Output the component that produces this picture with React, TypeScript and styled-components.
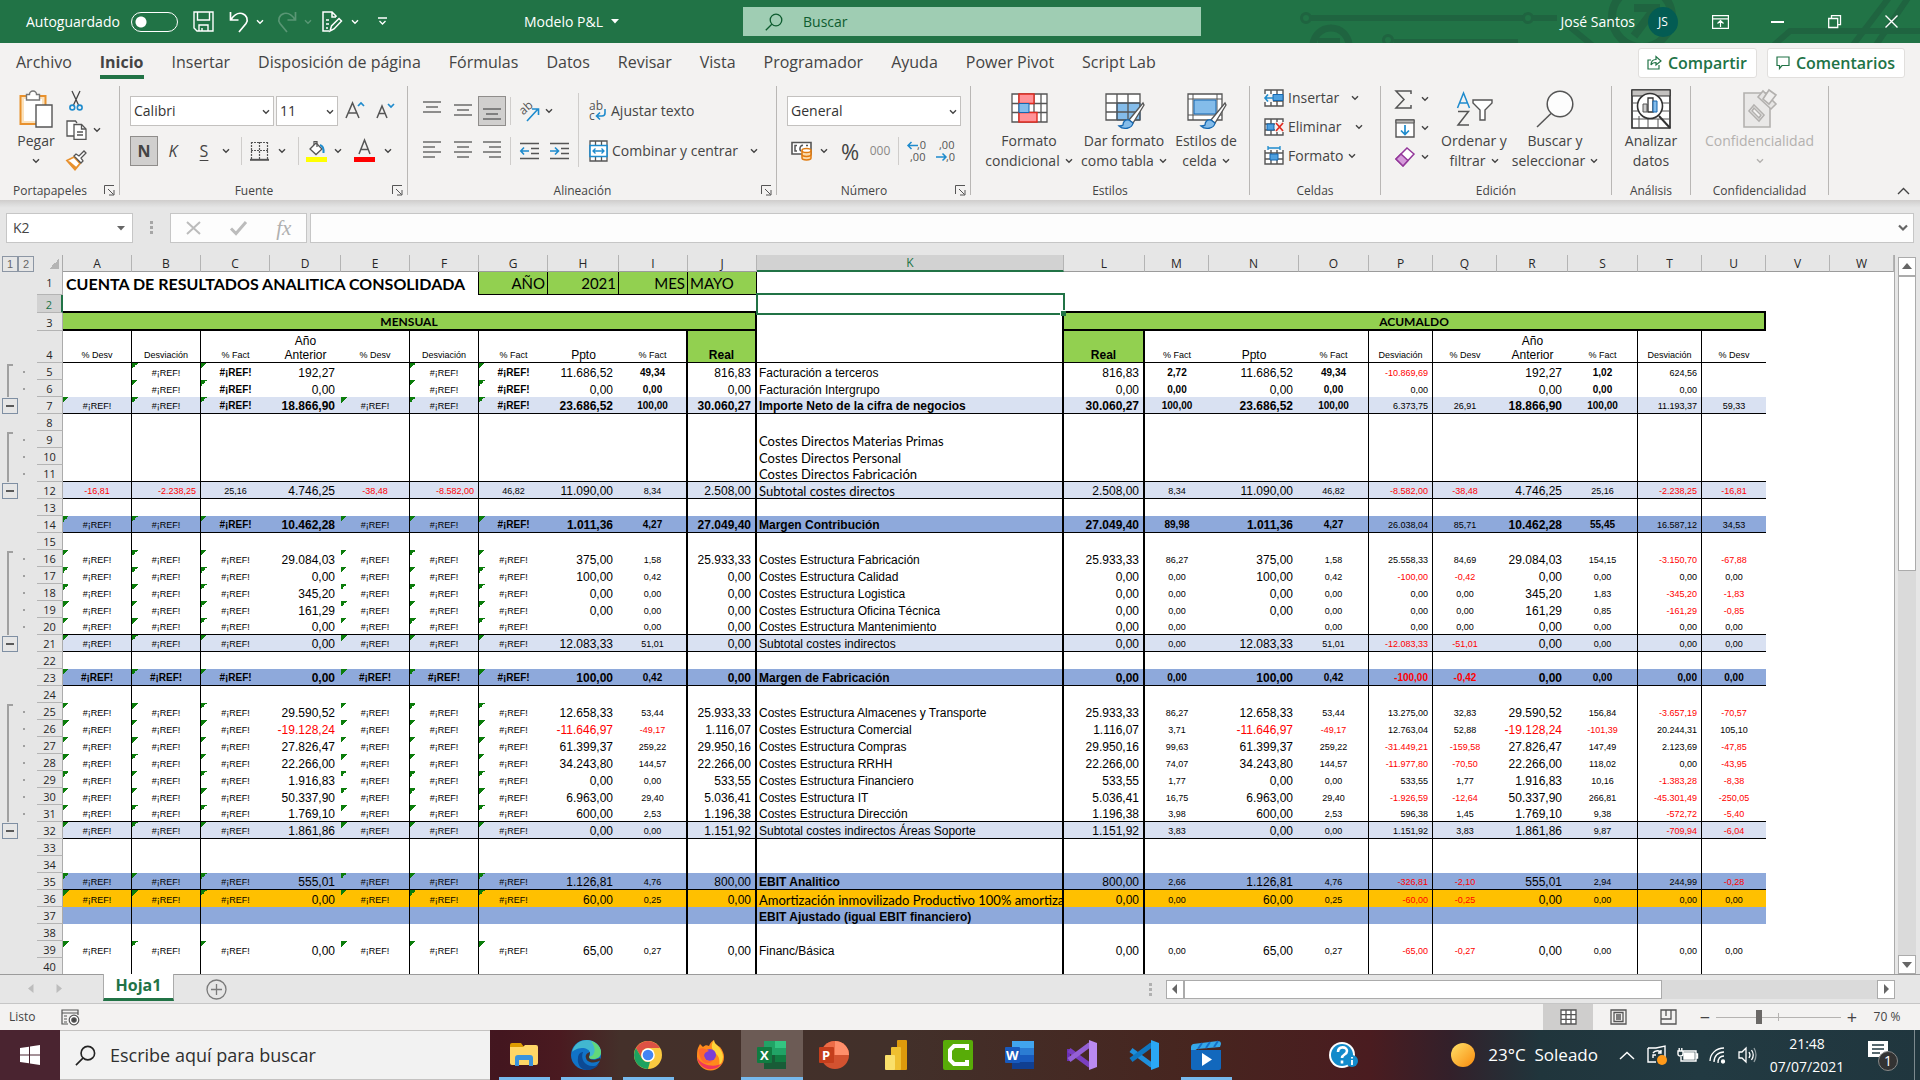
import React from 'react';
import styled, { createGlobalStyle, css } from 'styled-components';

const ui = `'Open Sans', 'Noto Sans', sans-serif`;
const arial = `'Liberation Sans', Arial, sans-serif`;
const calibri = `Lato, 'Open Sans', sans-serif`;
const green = '#217346';
const ink = '#444444';
const blue = '#1e8bcd';

const GlobalStyle = createGlobalStyle`
  *, *::before, *::after { box-sizing: border-box; }
  html, body { margin: 0; padding: 0; overflow: hidden; }
  button, input, select { font: inherit; color: inherit; margin: 0; border-radius: 0; }
  button { padding: 0; border: 0; background: none; cursor: default; }
  svg { display: block; flex: none; overflow: visible; }
`;

const Window = styled.div`
  display: flex;
  flex-direction: column;
  height: 100vh;
  overflow: hidden;
  background: #e6e6e6;
  color: ${ink};
  font: 14px/20px ${ui};
`;

/* ---------- title bar ---------- */

const TitleBar = styled.header`
  position: relative;
  display: grid;
  grid-template-columns: 743fr 458fr 719fr;
  align-items: center;
  flex: none;
  height: 43px;
  background: ${green};
  color: #fff;
  overflow: hidden;
`;

const Circuit = styled.svg`
  position: absolute;
  top: 0;
  right: 0;
`;

const TitleLeft = styled.div`
  display: flex;
  align-items: center;
  padding-left: 26px;
  height: 43px;
  line-height: 20px;
`;

const QuickButton = styled.button<{ $w: number; $dim?: boolean }>`
  display: flex;
  align-items: center;
  justify-content: center;
  width: ${p => p.$w}px;
  height: 32px;
  color: #fff;
  opacity: ${p => (p.$dim ? 0.25 : 1)};
`;

const SwitchLabel = styled.label`
  display: flex;
  align-items: center;
  justify-content: space-between;
  width: 152px;
  font-size: 14px;
`;

const Switch = styled.input`
  appearance: none;
  width: 47px;
  height: 20px;
  border: 1px solid #fff;
  border-radius: 10px;
  background: radial-gradient(circle at 9px 9px, #fff 5px, transparent 6px);
`;

const DocName = styled.button`
  display: flex;
  align-items: center;
  gap: 8px;
  margin-left: auto;
  margin-right: 124px;
  font-size: 14px;
  color: #fff;
`;

const SearchBox = styled.label`
  display: flex;
  align-items: center;
  gap: 18px;
  height: 29px;
  padding-left: 22px;
  background: #9fcdb3;
  color: #0e5c2f;
  font-size: 14px;
`;

const SearchInput = styled.input`
  flex: 1;
  min-width: 0;
  border: 0;
  outline: 0;
  background: transparent;
  &::placeholder { color: #0e5c2f; opacity: 1; }
`;

const TitleRight = styled.div`
  position: relative;
  display: flex;
  align-items: center;
  justify-content: flex-end;
  font-size: 14px;
`;

const Avatar = styled.span`
  width: 30px;
  height: 30px;
  margin: 0 14px 0 13px;
  border-radius: 50%;
  background: #035c53;
  font-size: 12px;
  line-height: 30px;
  text-align: center;
`;

const WinButton = styled.button`
  display: flex;
  align-items: center;
  justify-content: center;
  width: 57px;
  height: 43px;
  color: #fff;
`;

/* ---------- ribbon ---------- */

const TabRow = styled.nav`
  display: flex;
  align-items: center;
  flex: none;
  height: 39px;
  padding: 0 15px 0 16px;
  gap: 28px;
  background: #f3f2f1;
  font-size: 16px;
`;

const Tab = styled.button<{ $active?: boolean }>`
  height: 34px;
  border-bottom: 4px solid ${p => (p.$active ? green : 'transparent')};
  padding-top: 4px;
  font-weight: ${p => (p.$active ? 700 : 400)};
  font-size: 16px;
  line-height: 26px;
  white-space: nowrap;
  align-self: flex-start;
  margin-top: 2px;
`;

const TabActions = styled.div`
  display: flex;
  gap: 10px;
  margin-left: auto;
`;

const ActionButton = styled.button`
  display: flex;
  align-items: center;
  gap: 6px;
  height: 30px;
  padding: 0 9px 0 8px;
  border: 1px solid #e1dfdd;
  border-radius: 3px;
  background: #fff;
  color: ${green};
  font-size: 16px;
  font-weight: 600;
  line-height: 24px;
`;

const Ribbon = styled.section`
  display: flex;
  flex: none;
  height: 118px;
  padding: 4px 0 5px;
  background: #f3f2f1;
`;

const RibbonShadow = styled.div`
  flex: none;
  height: 13px;
  background: linear-gradient(#cfcdcc, #dedede 5px, #e6e6e6 8px);
`;

const GroupBox = styled.div<{ $w: number }>`
  display: flex;
  flex-direction: column;
  flex: none;
  width: ${p => p.$w}px;
  border-right: 1px solid #b9b7b5;
`;

const GroupBody = styled.div<{ $top: number; $left: number }>`
  display: flex;
  height: 100px;
  padding: ${p => p.$top}px 0 0 ${p => p.$left}px;
`;

const GroupFoot = styled.div`
  display: flex;
  align-items: center;
  height: 9px;
  font-size: 12px;
  line-height: 9px;
`;

const GroupName = styled.span`
  flex: 1;
  text-align: center;
  white-space: nowrap;
`;

const Launcher = styled.button`
  display: flex;
  width: 19px;
  justify-content: center;
`;

const Stack = styled.div<{ $w?: number; $gap?: number }>`
  display: flex;
  flex-direction: column;
  gap: ${p => p.$gap ?? 10}px;
  width: ${p => (p.$w ? `${p.$w}px` : 'auto')};
`;

const Row = styled.div<{ $h?: number }>`
  display: flex;
  align-items: center;
  height: ${p => p.$h ?? 30}px;
`;

const Tool = styled.button<{ $w: number; $on?: boolean }>`
  display: flex;
  align-items: center;
  justify-content: center;
  flex: none;
  width: ${p => p.$w}px;
  height: 30px;
  font-size: 16px;
  line-height: 24px;
  ${p => p.$on && css`
    background: #d0cfce;
    border: 1px solid #8f8d8b;
  `}
`;

const TextTool = styled.button`
  display: flex;
  align-items: center;
  gap: 4px;
  height: 30px;
  font-size: 14px;
  white-space: nowrap;
`;

const Divider = styled.span<{ $w: number }>`
  flex: none;
  width: ${p => p.$w}px;
  height: 28px;
  background: linear-gradient(#cfcdcb, #cfcdcb) center / 1px 100% no-repeat;
`;

const TallDivider = styled.span`
  width: 1px;
  height: 74px;
  margin: -3px 10px 0 0;
  background: #cfcdcb;
`;

const Picker = styled.span<{ $w: number }>`
  position: relative;
  width: ${p => p.$w}px;
  height: 30px;
  margin-right: 2px;
  & > svg { position: absolute; right: 4px; top: 13px; pointer-events: none; }
`;

const Select = styled.select`
  appearance: none;
  width: 100%;
  height: 30px;
  padding: 0 18px 0 3px;
  border: 1px solid #c3c1bf;
  background: #fff;
  color: #333;
  font-size: 14px;
  outline: 0;
`;

const BigButton = styled.button<{ $w: number; $off?: boolean }>`
  display: flex;
  flex-direction: column;
  align-items: center;
  flex: none;
  width: ${p => p.$w}px;
  height: 86px;
  color: ${p => (p.$off ? '#b3b1af' : ink)};
  font-size: 14px;
  line-height: 20px;
  white-space: nowrap;
`;

const BigIcon = styled.span`
  display: flex;
  align-items: center;
  height: 43px;
  padding-bottom: 2px;
`;

const BigLine = styled.span`
  display: flex;
  align-items: center;
  gap: 5px;
  height: 20px;
`;

const Collapse = styled.button`
  margin: auto 10px 0 auto;
`;

/* ---------- formula bar ---------- */

const FormulaBar = styled.div`
  display: flex;
  flex: none;
  height: 42px;
  padding: 0 6px 0 6px;
`;

const NameBox = styled.div`
  display: flex;
  align-items: center;
  width: 127px;
  height: 30px;
  padding-right: 7px;
  border: 1px solid #c6c6c6;
  background: #fff;
`;

const NameInput = styled.input`
  flex: 1;
  min-width: 0;
  padding: 0 6px;
  border: 0;
  outline: 0;
  background: none;
  font-size: 14px;
`;

const Grip = styled.span`
  width: 37px;
  height: 30px;
  padding: 8px 17px;
  background: repeating-linear-gradient(#a6a6a6 0 3px, transparent 3px 5px) content-box;
`;

const FxBox = styled.div`
  display: flex;
  justify-content: space-around;
  align-items: center;
  width: 137px;
  height: 30px;
  margin-right: 3px;
  border: 1px solid #c6c6c6;
  background: #fdfdfd;
  color: #bcbcbc;
`;

const FxButton = styled.button`
  font: italic 21px/26px 'Liberation Serif', serif;
  color: #b0b0b0;
`;

const FormulaField = styled.div`
  display: flex;
  align-items: center;
  flex: 1;
  height: 30px;
  padding-right: 5px;
  border: 1px solid #c6c6c6;
  background: #fdfdfd;
`;

const FormulaInput = styled.input`
  flex: 1;
  border: 0;
  outline: 0;
  background: none;
`;

/* ---------- sheet ---------- */

const SheetArea = styled.main`
  display: flex;
  flex: 1;
  min-height: 0;
  overflow: hidden;
`;

const SheetClip = styled.div`
  flex: 1;
  min-width: 0;
  overflow: hidden;
  border-right: 1px solid #ababab;
`;

const Sheet = styled.table`
  width: 100%;
  table-layout: fixed;
  border-collapse: separate;
  border-spacing: 0;
  color: #000;
  th, td { padding: 0; overflow: hidden; white-space: nowrap; }
`;

const ColHead = styled.th<{ $sel?: boolean }>`
  height: 17px;
  border-right: 1px solid #b4b4b4;
  border-bottom: ${p => (p.$sel ? `2px solid ${green}` : '1px solid #9b9b9b')};
  background: ${p => (p.$sel ? '#d2d2d2' : '#e6e6e6')};
  color: ${p => (p.$sel ? green : '#262626')};
  font: 12px/15px ${ui};
`;

const Corner = styled.th`
  height: 17px;
  border-right: 1px solid #ababab;
  background: linear-gradient(135deg, transparent 50%, #b4b4b4 50%) right 3px bottom 3px / 10px 10px no-repeat #e6e6e6;
`;

const RowHead = styled.th<{ $sel?: boolean; $middle?: boolean }>`
  border-right: ${p => (p.$sel ? `2px solid ${green}` : '1px solid #ababab')};
  border-bottom: 1px solid #b4b4b4;
  background: ${p => (p.$sel ? '#d2d2d2' : '#e6e6e6')};
  color: ${p => (p.$sel ? green : '#262626')};
  font: 11px/14px ${ui};
  text-align: center;
  vertical-align: ${p => (p.$middle ? 'middle' : 'bottom')};
`;

const LevelCell = styled.th`
  background: #e6e6e6;
  text-align: left;
  font-size: 0;
  line-height: 0;
`;

const LevelButton = styled.button`
  width: 16px;
  height: 16px;
  border: 1px solid #8c96a4;
  color: #666;
  font: 11px/14px ${arial};
  vertical-align: top;
  &:first-child { margin-left: 2px; }
`;

const OutlineCell = styled.th<{ $kind: string }>`
  background-color: #e6e6e6;
  text-align: left;
  ${p => p.$kind === 'first' && css`
    background-image: linear-gradient(#a0a0a0, #a0a0a0), linear-gradient(#a0a0a0, #a0a0a0), linear-gradient(#a0a0a0, #a0a0a0);
    background-position: 7px 1px, 7px 1px, 23px 8px;
    background-size: 6px 2px, 2px 100%, 2px 2px;
    background-repeat: no-repeat;
  `}
  ${p => p.$kind === 'mid' && css`
    background-image: linear-gradient(#a0a0a0, #a0a0a0), linear-gradient(#a0a0a0, #a0a0a0);
    background-position: 7px 0, 23px 8px;
    background-size: 2px 100%, 2px 2px;
    background-repeat: no-repeat;
  `}
`;

const FoldButton = styled.button`
  display: flex;
  align-items: center;
  justify-content: center;
  width: 16px;
  height: 16px;
  margin-left: 2px;
  border: 1px solid #7f8fa3;
  &::after { content: ''; width: 8px; height: 2px; background: #5a5a5a; }
`;

type CellProps = {
  $right?: number;
  $bottom?: number;
  $fill?: string;
  $align?: string;
  $size?: number;
  $bold?: boolean;
  $red?: boolean;
  $err?: boolean;
  $calibri?: boolean;
  $pad?: number;
  $middle?: boolean;
};

const Cell = styled.td<CellProps>`
  position: relative;
  border: 0 solid #000;
  border-right-width: ${p => p.$right ?? 0}px;
  border-bottom-width: ${p => p.$bottom ?? 0}px;
  background-color: ${p => p.$fill ?? '#fff'};
  && { padding: 0 ${p => p.$pad ?? 0}px; }
  color: ${p => (p.$red ? '#ff0000' : '#000')};
  font-family: ${p => (p.$calibri ? calibri : arial)};
  font-size: ${p => p.$size ?? 12}px;
  font-weight: ${p => (p.$bold ? 700 : 400)};
  line-height: 14px;
  text-align: ${p => p.$align ?? 'left'};
  vertical-align: ${p => (p.$middle ? 'middle' : 'bottom')};
  ${p => p.$err && css`
    background-image: linear-gradient(135deg, #0b7d0b 50%, transparent 50%);
    background-size: 6px 6px;
    background-repeat: no-repeat;
  `}
`;

const ActiveCell = styled.td`
  position: relative;
  background: #fff;
  && { overflow: visible; }
`;

const Selection = styled.div`
  position: absolute;
  z-index: 2;
  inset: -2px -1px;
  border: 2px solid ${green};
  &::after {
    content: '';
    position: absolute;
    right: -3px;
    bottom: -3px;
    width: 6px;
    height: 6px;
    border: 1px solid #fff;
    border-width: 1px 0 0 1px;
    background: ${green};
  }
`;

const VScroll = styled.div`
  display: flex;
  flex-direction: column;
  flex: none;
  width: 18px;
  margin: 2px 4px 0 3px;
  background: #dadada;
`;

const ScrollButton = styled.button<{ $end?: boolean }>`
  display: flex;
  align-items: center;
  justify-content: center;
  flex: none;
  width: 18px;
  height: 19px;
  margin-top: ${p => (p.$end ? 'auto' : '0')};
  border: 1px solid #ababab;
  background: #fff;
`;

const VThumb = styled.div`
  height: 295px;
  border: 1px solid #ababab;
  background: #fff;
`;

/* ---------- sheet tabs and status bar ---------- */

const SheetTabs = styled.div`
  display: flex;
  flex: none;
  height: 30px;
  border-top: 1px solid #9b9b9b;
  border-bottom: 1px solid #c6c6c6;
`;

const TabArrows = styled.div`
  display: flex;
  align-items: center;
  gap: 22px;
  width: 103px;
  height: 27px;
  padding-left: 28px;
`;

const SheetTab = styled.button`
  width: 71px;
  height: 27px;
  margin-top: -1px;
  padding-bottom: 3px;
  border: 1px solid #ababab;
  border-width: 0 1px;
  border-bottom: 3px solid ${green};
  background: #fff;
  color: ${green};
  font-size: 16px;
  font-weight: 700;
  line-height: 20px;
`;

const AddSheet = styled.button`
  height: 28px;
  margin-left: 32px;
`;

const HScroll = styled.div`
  display: flex;
  align-items: center;
  width: 746px;
  margin-left: auto;
  margin-right: 25px;
  height: 28px;
`;

const HGrip = styled.span`
  width: 3px;
  height: 13px;
  margin-right: 14px;
  background: repeating-linear-gradient(#b0b0b0 0 3px, transparent 3px 5px);
`;

const HTrack = styled.div`
  flex: 1;
  height: 19px;
  background: #dadada;
`;

const HThumb = styled.div`
  width: 69%;
  height: 19px;
  border: 1px solid #ababab;
  background: #fff;
`;

const StatusBar = styled.footer`
  display: flex;
  align-items: center;
  flex: none;
  height: 26px;
  padding: 0 18px 0 9px;
  background: #f3f2f1;
  font-size: 12px;
`;

const StatusIcon = styled.button`
  margin-left: 25px;
`;

const Views = styled.div`
  display: flex;
  margin-left: auto;
`;

const ViewButton = styled.button<{ $on?: boolean }>`
  display: flex;
  align-items: center;
  justify-content: center;
  width: 50px;
  height: 26px;
  background: ${p => (p.$on ? '#cfcecd' : 'transparent')};
`;

const ZoomBox = styled.div`
  display: flex;
  align-items: center;
  gap: 5px;
  margin-left: 6px;
`;

const ZoomStep = styled.button`
  width: 12px;
  font-size: 18px;
  line-height: 20px;
`;

const ZoomSlider = styled.input`
  appearance: none;
  width: 125px;
  height: 16px;
  outline: 0;
  background:
    linear-gradient(#b5b3b1, #b5b3b1) center / 1px 8px no-repeat,
    linear-gradient(#b5b3b1, #b5b3b1) center / 100% 1px no-repeat;
  &::-webkit-slider-thumb { appearance: none; width: 6px; height: 14px; background: #6a6866; }
`;

const ZoomValue = styled.button`
  width: 30px;
  margin-left: 9px;
  font-size: 12px;
  white-space: nowrap;
`;

/* ---------- taskbar ---------- */

const Taskbar = styled.footer`
  display: flex;
  flex: none;
  height: 50px;
  color: #fff;
  background: linear-gradient(90deg, #4a2430 0, #4a2430 60px, #43161f 500px, #4a1a20 560px, #44302a 620px, #42302a 900px, #47251f 1200px, #4a1c20 1370px, #33202a 1450px, #20353c 1540px, #223a42 1700px, #20363e 100%);
`;

const StartButton = styled.button`
  display: flex;
  align-items: center;
  justify-content: center;
  width: 60px;
  height: 50px;
`;

const TaskSearch = styled.label`
  display: flex;
  align-items: center;
  gap: 12px;
  width: 430px;
  padding-left: 15px;
  border: 1px solid #c4c2c1;
  border-width: 1px 0;
  background: #f2f2f2;
  color: #222;
`;

const TaskInput = styled.input`
  flex: 1;
  height: 30px;
  border: 0;
  outline: 0;
  background: none;
  font-size: 18px;
  &::placeholder { color: #2f2f2f; opacity: 1; }
`;

const TaskApps = styled.div`
  display: flex;
  padding-left: 3px;
`;

const AppButton = styled.button<{ $open?: boolean; $on?: boolean }>`
  display: flex;
  align-items: center;
  justify-content: center;
  width: 62px;
  height: 50px;
  background: ${p => (p.$on ? '#6c5b55' : 'transparent')};
  background-image: ${p => (p.$open ? 'linear-gradient(#76b9ed, #76b9ed)' : 'none')};
  background-size: ${p => (p.$on ? '100%' : '51px')} 3px;
  background-position: bottom center;
  background-repeat: no-repeat;
`;

const Tray = styled.div`
  display: flex;
  align-items: center;
  margin-left: auto;
  padding-right: 5px;
`;

const TrayButton = styled.button<{ $w: number }>`
  display: flex;
  align-items: center;
  justify-content: center;
  width: ${p => p.$w}px;
  height: 50px;
  color: #fff;
`;

const Weather = styled.button`
  display: flex;
  align-items: center;
  gap: 13px;
  margin-left: 92px;
  margin-right: 14px;
  color: #fff;
  font-size: 17px;
  line-height: 24px;
  white-space: pre;
`;

const Clock = styled.time`
  width: 90px;
  font-size: 14px;
  line-height: 23px;
  text-align: center;
  white-space: nowrap;
`;

const Edge = styled.span`
  width: 1px;
  height: 50px;
  background: #7c898e;
`;

/* ---------- small drawings ---------- */

const Chev = ({ size = 8, color = 'currentColor' }: { size?: number; color?: string }) => (
  <svg width={size} height={size / 2 + 2} viewBox="0 0 8 6" fill="none" stroke={color} strokeWidth="1.4">
    <path d="M1 1.2l3 3 3-3" />
  </svg>
);

const Tri = ({ dir }: { dir: 'up' | 'down' | 'left' | 'right' }) => {
  const d = { up: 'M0 7h10L5 1z', down: 'M0 2h10L5 8z', left: 'M7 0v10L2 5z', right: 'M3 0v10l5-5z' }[dir];
  return (
    <svg width="10" height="10" viewBox="0 0 10 10">
      <path d={d} fill="#666" />
    </svg>
  );
};

const LaunchIcon = () => (
  <svg width="11" height="11" viewBox="0 0 11 11" fill="none" stroke="#555">
    <path d="M.5 9V.5H10M4 4l5.500 5.500M10 5v5H5" />
  </svg>
);

const Lines = ({ rows, color = '#555' }: { rows: [number, number, number][]; color?: string }) => (
  <svg width="18" height="20" viewBox="0 0 18 20" stroke={color} strokeWidth="1.300">
    {rows.map(([x1, x2, y]) => (
      <path key={y} d={`M${x1} ${y}H${x2}`} />
    ))}
  </svg>
);

const SearchIcon = ({ size, color, w = 1.3 }: { size: number; color: string; w?: number }) => (
  <svg width={size} height={size} viewBox="0 0 18 18" fill="none" stroke={color} strokeWidth={w}>
    <circle cx="11" cy="7" r="5.800" />
    <path d="M6.800 11.200L.8 17.200" />
  </svg>
);

const PasteIcon = () => (
  <svg width="34" height="40" viewBox="0 0 34 40" fill="none">
    <path d="M1.500 7h25v28h-25z" fill="#fbe2bd" stroke="#e8912d" strokeWidth="2" />
    <path d="M5 10h18v22H5z" fill="#fff" />
    <path d="M7.500 11V5.500h3a3.500 3.500 0 0 1 7 0h3V11z" fill="#fff" stroke="#777" strokeWidth="1.400" />
    <path d="M17 16h16v22H17z" fill="#fff" stroke="#555" strokeWidth="1.400" />
  </svg>
);

const CutIcon = () => (
  <svg width="14" height="20" viewBox="0 0 14 20" fill="none" strokeWidth="1.300">
    <path d="M3 0l6.500 14M11 0L4.500 14" stroke="#444" />
    <circle cx="3.300" cy="16.500" r="2.400" stroke={blue} strokeWidth="1.600" />
    <circle cx="10.700" cy="16.500" r="2.400" stroke={blue} strokeWidth="1.600" />
  </svg>
);

const CopyIcon = () => (
  <svg width="21" height="20" viewBox="0 0 21 20" fill="#fff" stroke="#555" strokeWidth="1.300">
    <path d="M8 16H1V1h8.500L11 3" />
    <path d="M8 4.500h7.500l4.500 4.500v10.300H8z" />
    <path d="M15.500 4.500V9H20M11 12h6M11 15h6" fill="none" />
  </svg>
);

const BrushIcon = () => (
  <svg width="21" height="20" viewBox="0 0 21 20" fill="none">
    <path d="M1 10.500l7-3.500 6 6.500-5 6z" fill="#fff" stroke="#e8912d" strokeWidth="1.800" />
    <path d="M3 12l7 6-3-2z" stroke="#e8912d" strokeWidth="2" />
    <path d="M8 6l2-2 3 2 5-5 2 2-5 5 2 3-2 2z" fill="#fff" stroke="#555" strokeWidth="1.300" />
  </svg>
);

const SaveIcon = () => (
  <svg width="21" height="21" viewBox="0 0 21 21" fill="none" stroke="#fff" strokeWidth="1.400">
    <path d="M1 1h19v19H4l-3-3zM4.500 1v8h12V1M6 20v-6h9v6M9 20v-3" />
  </svg>
);

const UndoIcon = ({ flip }: { flip?: boolean }) => (
  <svg width="20" height="22" viewBox="0 0 20 22" fill="none" stroke="#fff" strokeWidth="1.700">
    <g transform={flip ? 'translate(20 0) scale(-1 1)' : undefined}>
      <path d="M1.500 1v8h8M2 8.500C5 4 9 1.500 13 2.500c5 1.500 6.500 6.500 4 10L10 21" />
    </g>
  </svg>
);

const DocPenIcon = () => (
  <svg width="20" height="22" viewBox="0 0 20 22" fill="none" stroke="#fff" strokeWidth="1.500">
    <path d="M14 6V5l-4-4H1v19h6M10 1v5h4M4 9h3M4 13h3M4 17h2" />
    <path d="M8 20l1.500-5L17 7.500l2.500 2.500L12 18z" />
  </svg>
);

const BordersIcon = () => (
  <svg width="19" height="20" viewBox="0 0 19 20" fill="none" stroke="#555">
    <path d="M1.500 1v17M17.500 1v17M9.500 1v17M1 1.500h17M1 9.500h17" strokeDasharray="2 1" strokeWidth="1.200" />
    <path d="M0 18.800h19" strokeWidth="2" />
  </svg>
);

const BucketIcon = () => (
  <svg width="21" height="22" viewBox="0 0 21 22" fill="none">
    <path d="M4 9l6-6 6 6-6 5.500z" fill="#fff" stroke="#555" strokeWidth="1.300" />
    <path d="M8 5V1.500h3V7" stroke="#555" strokeWidth="1.200" />
    <path d="M14 5c3 1 4 3 3.500 8" stroke={blue} strokeWidth="2" />
    <path d="M0 17h21v5H0z" fill="#ff0" />
  </svg>
);

const FontColorIcon = () => (
  <svg width="21" height="22" viewBox="0 0 21 22" fill="none">
    <path d="M5 14L10.500 0 16 14M7 9.500h7" stroke="#555" strokeWidth="1.500" />
    <path d="M0 17h21v5H0z" fill="#f00" />
  </svg>
);

const GrowIcon = ({ small }: { small?: boolean }) => (
  <svg width="20" height="22" viewBox="0 0 20 22" fill="none" strokeWidth="1.500">
    <path d={small ? 'M1 18L6 6l5 12M3 13.500h6' : 'M1 18L7.500 3 14 18M3.500 13h8'} stroke="#555" />
    <path d={small ? 'M12 4l3 3 3-3' : 'M13 6l3-3 3 3'} stroke={blue} strokeWidth="1.700" />
  </svg>
);

const OrientIcon = () => (
  <svg width="21" height="21" viewBox="0 0 21 21" fill="none">
    <text x="1" y="12" transform="rotate(-42 6 9)" fontFamily={ui} fontSize="12" fill="#555">ab</text>
    <path d="M8 20L19 8M13 8h6.500v6" stroke={blue} strokeWidth="1.600" />
  </svg>
);

const WrapIcon = () => (
  <svg width="18" height="22" viewBox="0 0 18 22" fill="none">
    <text x="0" y="10" fontFamily={ui} fontSize="12" fill="#555">ab</text>
    <text x="0" y="20" fontFamily={ui} fontSize="12" fill="#555">c</text>
    <path d="M16 9v4c0 2-1 3-3 3H8M11 12.500L7.500 16l3.500 3.500" stroke={blue} strokeWidth="1.600" />
  </svg>
);

const MergeIcon = () => (
  <svg width="19" height="22" viewBox="0 0 19 22" fill="none" stroke="#555" strokeWidth="1.300">
    <path d="M1 1h17v20H1zM6.500 1v5M12.500 1v5M6.500 16v5M12.500 16v5" fill="#fff" />
    <path d="M1 5.500h17v11H1z" fill="#fff" stroke={blue} strokeWidth="1.600" />
    <path d="M4 11h11M6.500 8.500L4 11l2.500 2.500M12.500 8.500L15 11l-2.500 2.500" stroke={blue} />
  </svg>
);

const IndentIcon = ({ inward }: { inward?: boolean }) => (
  <svg width="19" height="18" viewBox="0 0 19 18" fill="none" stroke="#555" strokeWidth="1.300">
    <path d="M0 1.500h19M11 6.500h8M11 11.500h8M0 16.500h19" />
    <path d={inward ? 'M0 9h8M5 5.500L8.500 9 5 12.500' : 'M1 9h8M4 5.500L.8 9 4 12.500'} stroke={blue} strokeWidth="1.600" />
  </svg>
);

const CurrencyIcon = () => (
  <svg width="21" height="20" viewBox="0 0 21 20" fill="none">
    <path d="M1 1.500h19V13H1z" fill="#fff" stroke="#555" strokeWidth="1.600" />
    <path d="M6 4.500H4v5.500h2M12 4.500C9 3.500 8 9 10 10M17 4.500h-2" stroke="#555" strokeWidth="1.500" />
    <path d="M11 9.500V17c0 2.500 9 2.500 9 0V9.500" fill="#fbd9a8" stroke="#e07b10" strokeWidth="1.500" />
    <ellipse cx="15.500" cy="9.500" rx="4.500" ry="2" fill="#fff" stroke="#e07b10" strokeWidth="1.500" />
    <path d="M11 13.500c0 2.500 9 2.500 9 0" stroke="#e07b10" strokeWidth="1.500" />
  </svg>
);

const DecimalIcon = ({ less }: { less?: boolean }) => (
  <svg width="21" height="22" viewBox="0 0 21 22" fill="none">
    <text x={less ? 3 : 10} y="9" fontFamily={ui} fontSize="11" fill="#555">{less ? ',00' : ',0'}</text>
    <text x={less ? 10 : 3} y="21" fontFamily={ui} fontSize="11" fill="#555">{less ? ',0' : ',00'}</text>
    <path d={less ? 'M0 17h10M6.500 13.500L10 17l-3.500 3.500' : 'M1 5.500h10M4.500 2L1 5.500 4.500 9'} stroke={blue} strokeWidth="1.500" />
  </svg>
);

const BrushOver = () => (
  <g>
    <path d="M38 11L24 28l4 3L39 13z" fill="#fff" stroke="#555" strokeWidth="1.300" />
    <path d="M24 28c-4-1-6 2-6 5-1 1-3 1-4 1 4 4 13 3 14-3z" fill="#84bcea" stroke="#1467b0" strokeWidth="1.300" />
  </g>
);

const CondIcon = () => (
  <svg width="37" height="34" viewBox="0 0 37 34" fill="none">
    <path d="M1 2h35v28H1zM8 2v28M23 2v28M30 2v28M1 11.500h35M1 20.500h35" fill="#fff" stroke="#555" strokeWidth="1.300" />
    <path d="M8 2h15v9.500H8zM8 20.500h18V30H8z" fill="#ff9297" stroke="#e02b20" strokeWidth="1.400" />
    <path d="M8 11.500h10v9H8z" fill="#84bcea" stroke="#1467b0" />
  </svg>
);

const TableIcon = () => (
  <svg width="39" height="34" viewBox="0 0 39 34" fill="none">
    <path d="M1 2h34v26H1z" fill="#fff" />
    <path d="M12 11h23v17H12z" fill="#84bcea" stroke="#1467b0" />
    <path d="M1 2h34v26H1zM12 2v26M23 2v26M1 11h34M1 20h34" stroke="#555" strokeWidth="1.300" />
    <BrushOver />
  </svg>
);

const StyleIcon = () => (
  <svg width="39" height="34" viewBox="0 0 39 34" fill="none">
    <path d="M1 2h34v26H1z" fill="#fff" stroke="#555" strokeWidth="1.300" />
    <path d="M6 2v26M30 2v26M1 7h34M1 23h34" stroke="#555" />
    <path d="M7 8h22v14H7z" fill="#84bcea" stroke="#1467b0" />
    <BrushOver />
  </svg>
);

const CellsIcon = ({ kind }: { kind: 'in' | 'out' | 'fmt' }) => (
  <svg width="20" height="20" viewBox="0 0 20 20" fill="none">
    <path d="M1 2h18v16H1zM7 2v16M13 2v16M1 7h18M1 13h18" fill="#fff" stroke="#555" strokeWidth="1.400" />
    {kind === 'in' && (
      <g>
        <path d="M0 6h9v8H0z" fill="#f3f2f1" />
        <path d="M9 6.500h10v6H9z" fill="#4fa0df" stroke="#1467b0" />
        <path d="M1 10h8M4 6.500L1 10l3 3.500" stroke={blue} strokeWidth="1.600" />
      </g>
    )}
    {kind === 'out' && (
      <g>
        <path d="M11 5h9v10h-9z" fill="#f3f2f1" />
        <path d="M3 7h7v6H3z" fill="#4fa0df" stroke="#1467b0" />
        <path d="M12 6l7 8M19 6l-7 8" stroke="#e02b20" strokeWidth="1.700" />
      </g>
    )}
    {kind === 'fmt' && (
      <g>
        <path d="M0 0h20v4H0z" fill="#f3f2f1" />
        <path d="M4 2h12M4 0v4M16 0v4" stroke={blue} strokeWidth="1.300" />
        <path d="M6 8h8v6H6z" fill="#4fa0df" stroke="#1467b0" />
      </g>
    )}
  </svg>
);

const SumIcon = () => (
  <svg width="17" height="19" viewBox="0 0 17 19" fill="none" stroke="#555" strokeWidth="1.500">
    <path d="M16 4V1H1l8 8.500L1 18h15v-3" />
  </svg>
);

const FillIcon = () => (
  <svg width="20" height="19" viewBox="0 0 20 19" fill="none">
    <path d="M1 1h18v17H1z" fill="#fff" stroke="#555" strokeWidth="1.400" />
    <path d="M1 1h18v3H1z" fill="#b9b7b5" stroke="#555" />
    <path d="M10 6v9M6 11.500l4 4 4-4" stroke={blue} strokeWidth="1.700" />
  </svg>
);

const EraserIcon = () => (
  <svg width="20" height="20" viewBox="0 0 20 20" fill="none" stroke="#93379a" strokeWidth="1.500">
    <path d="M1 12L12 1l7 6L8 19z" fill="#fff" />
    <path d="M1 12l5-5 7 6.500L8 19z" fill="#d59bda" />
  </svg>
);

const SortIcon = () => (
  <svg width="37" height="36" viewBox="0 0 37 36" fill="none">
    <path d="M1.500 17L7.500 2l6 15M3.500 12h8" stroke={blue} strokeWidth="1.500" />
    <path d="M2 20.500h10.500L2 34h11" stroke="#555" strokeWidth="1.500" />
    <path d="M17 9h19v3l-7 7v10h-5V19l-7-7z" fill="#fff" stroke="#555" strokeWidth="1.400" />
  </svg>
);

const FindIcon = () => (
  <svg width="38" height="38" viewBox="0 0 38 38" fill="none" stroke="#555" strokeWidth="1.500">
    <circle cx="24" cy="14" r="12.800" fill="#fdfdfd" />
    <path d="M15 23.500L1 37" />
  </svg>
);

const AnalyzeIcon = () => (
  <svg width="40" height="40" viewBox="0 0 40 40" fill="none">
    <path d="M1 1h38v38H1z" fill="#fff" stroke="#333" strokeWidth="1.700" />
    <path d="M1 1h38v6H1z" fill="#c4c2c0" stroke="#333" />
    <path d="M1 14h38M1 22h38M1 30h38M8 27v12M17 27v12M27 30v9" stroke="#555" />
    <circle cx="19" cy="17" r="12.500" fill="#fff" stroke="#333" strokeWidth="1.600" />
    <path d="M12 15h4v8h-4z" fill="#ccc" stroke="#555" />
    <path d="M17 9h5v14h-5z" fill="#fff" stroke="#333" strokeWidth="1.300" />
    <path d="M22 12h4v11h-4z" fill="#84bcea" stroke="#1467b0" />
    <path d="M28 27l11 12" stroke="#333" strokeWidth="2" />
  </svg>
);

const SensIcon = () => (
  <svg width="34" height="38" viewBox="0 0 34 38" fill="none" stroke="#b3b1af" strokeWidth="1.600">
    <path d="M1 3h26v34H1z" fill="#e9e8e7" />
    <path d="M11 15l10 10-5 6L6 21z" fill="#f3f2f1" />
    <path d="M11 18l7 7-2 3-7-7z" />
    <path d="M15 7l5-6 13 13-5 5z" fill="#e6e5e4" />
    <path d="M20 9l6-9 7 5-7 9z" fill="#efeeed" />
  </svg>
);

/* ---------- sheet data ---------- */

const columns: [string, number | undefined][] = [
  ['A', 69], ['B', 69], ['C', 69], ['D', 71], ['E', 69], ['F', 69], ['G', 69], ['H', 71], ['I', 69], ['J', 69],
  ['K', 307], ['L', 81], ['M', 64], ['N', 90], ['O', 70], ['P', 64], ['Q', 64], ['R', 71], ['S', 70], ['T', 64],
  ['U', 64], ['V', 64], ['W', undefined],
];

const rightBorder: Record<string, number> = {
  A: 1, B: 1, E: 1, F: 1, I: 2, J: 2, K: 2, L: 2, O: 1, P: 1, S: 1, T: 1,
};
const wide = new Set(['D', 'H', 'J', 'L', 'N', 'R']);
const rightSmall = new Set(['B', 'F', 'P', 'T']);

/* '*' marks bold, '#' a broken reference, '~' the Calibri face */
const cellText: Record<number, string> = {
  5: '|#|*#|192,27||#|*#|11.686,52|*49,34|816,83|Facturación a terceros|816,83|*2,72|11.686,52|*49,34|-10.869,69||192,27|*1,02|624,56|',
  6: '|#|*#|0,00||#|*#|0,00|*0,00|0,00|Facturación Intergrupo|0,00|*0,00|0,00|*0,00|0,00||0,00|*0,00|0,00|',
  7: '#|#|*#|*18.866,90|#|#|*#|*23.686,52|*100,00|*30.060,27|*Importe Neto de la cifra de negocios|*30.060,27|*100,00|*23.686,52|*100,00|6.373,75|26,91|*18.866,90|*100,00|11.193,37|59,33',
  9: '||||||||||~Costes Directos Materias Primas||||||||||',
  10: '||||||||||~Costes Directos Personal||||||||||',
  11: '||||||||||~Costes Directos Fabricación||||||||||',
  12: '-16,81|-2.238,25|25,16|4.746,25|-38,48|-8.582,00|46,82|11.090,00|8,34|2.508,00|~Subtotal costes directos|2.508,00|8,34|11.090,00|46,82|-8.582,00|-38,48|4.746,25|25,16|-2.238,25|-16,81',
  14: '#|#|*#|*10.462,28|#|#|*#|*1.011,36|*4,27|*27.049,40|*Margen Contribución|*27.049,40|*89,98|*1.011,36|*4,27|26.038,04|85,71|*10.462,28|*55,45|16.587,12|34,53',
  16: '#|#|#|29.084,03|#|#|#|375,00|1,58|25.933,33|Costes Estructura Fabricación|25.933,33|86,27|375,00|1,58|25.558,33|84,69|29.084,03|154,15|-3.150,70|-67,88',
  17: '#|#|#|0,00|#|#|#|100,00|0,42|0,00|Costes Estructura Calidad|0,00|0,00|100,00|0,42|-100,00|-0,42|0,00|0,00|0,00|0,00',
  18: '#|#|#|345,20|#|#|#|0,00|0,00|0,00|Costes Estructura Logistica|0,00|0,00|0,00|0,00|0,00|0,00|345,20|1,83|-345,20|-1,83',
  19: '#|#|#|161,29|#|#|#|0,00|0,00|0,00|Costes Estructura Oficina Técnica|0,00|0,00|0,00|0,00|0,00|0,00|161,29|0,85|-161,29|-0,85',
  20: '#|#|#|0,00|#|#|#||0,00|0,00|Costes Estructura Mantenimiento|0,00|0,00||0,00|0,00|0,00|0,00|0,00|0,00|0,00',
  21: '#|#|#|0,00|#|#|#|12.083,33|51,01|0,00|Subtotal costes indirectos|0,00|0,00|12.083,33|51,01|-12.083,33|-51,01|0,00|0,00|0,00|0,00',
  23: '*#|*#|*#|*0,00|*#|*#|*#|*100,00|*0,42|*0,00|*Margen de Fabricación|*0,00|*0,00|*100,00|*0,42|*-100,00|*-0,42|*0,00|*0,00|*0,00|*0,00',
  25: '#|#|#|29.590,52|#|#|#|12.658,33|53,44|25.933,33|Costes Estructura Almacenes y Transporte|25.933,33|86,27|12.658,33|53,44|13.275,00|32,83|29.590,52|156,84|-3.657,19|-70,57',
  26: '#|#|#|-19.128,24|#|#|#|-11.646,97|-49,17|1.116,07|Costes Estructura Comercial|1.116,07|3,71|-11.646,97|-49,17|12.763,04|52,88|-19.128,24|-101,39|20.244,31|105,10',
  27: '#|#|#|27.826,47|#|#|#|61.399,37|259,22|29.950,16|Costes Estructura Compras|29.950,16|99,63|61.399,37|259,22|-31.449,21|-159,58|27.826,47|147,49|2.123,69|-47,85',
  28: '#|#|#|22.266,00|#|#|#|34.243,80|144,57|22.266,00|Costes Estructura RRHH|22.266,00|74,07|34.243,80|144,57|-11.977,80|-70,50|22.266,00|118,02|0,00|-43,95',
  29: '#|#|#|1.916,83|#|#|#|0,00|0,00|533,55|Costes Estructura Financiero|533,55|1,77|0,00|0,00|533,55|1,77|1.916,83|10,16|-1.383,28|-8,38',
  30: '#|#|#|50.337,90|#|#|#|6.963,00|29,40|5.036,41|Costes Estructura IT|5.036,41|16,75|6.963,00|29,40|-1.926,59|-12,64|50.337,90|266,81|-45.301,49|-250,05',
  31: '#|#|#|1.769,10|#|#|#|600,00|2,53|1.196,38|Costes Estructura Dirección|1.196,38|3,98|600,00|2,53|596,38|1,45|1.769,10|9,38|-572,72|-5,40',
  32: '#|#|#|1.861,86|#|#|#|0,00|0,00|1.151,92|Subtotal costes indirectos Áreas Soporte|1.151,92|3,83|0,00|0,00|1.151,92|3,83|1.861,86|9,87|-709,94|-6,04',
  35: '#|#|#|555,01|#|#|#|1.126,81|4,76|800,00|*EBIT Analitico|800,00|2,66|1.126,81|4,76|-326,81|-2,10|555,01|2,94|244,99|-0,28',
  36: '#|#|#|0,00|#|#|#|60,00|0,25|0,00|~Amortización inmovilizado Productivo 100% amortizado|0,00|0,00|60,00|0,25|-60,00|-0,25|0,00|0,00|0,00|0,00',
  37: '||||||||||*EBIT Ajustado (igual EBIT financiero)||||||||||',
  39: '#|#|#|0,00|#|#|#|65,00|0,27|0,00|Financ/Básica|0,00|0,00|65,00|0,27|-65,00|-0,27|0,00|0,00|0,00|0,00',
};

const lime = '#92d050';
const light = '#d9e1f2';
const mid = '#8ea9db';
const fills: Record<number, string> = {
  7: light, 12: light, 14: mid, 21: light, 23: mid, 32: light, 35: mid, 36: '#ffc000', 37: mid,
};
const ruled = new Set([7, 11, 12, 14, 20, 21, 23, 31, 32, 35]);
const outline: Record<number, string> = {
  5: 'first', 6: 'mid', 7: 'end', 9: 'first', 10: 'mid', 11: 'mid', 12: 'end', 16: 'first', 17: 'mid', 18: 'mid',
  19: 'mid', 20: 'mid', 21: 'end', 25: 'first', 26: 'mid', 27: 'mid', 28: 'mid', 29: 'mid', 30: 'mid', 31: 'mid', 32: 'end',
};
const bodyRows = Array.from({ length: 36 }, (_, i) => i + 5);

const captions: Record<string, string> = {
  A: '% Desv', B: 'Desviación', C: '% Fact', D: 'Año\nAnterior', E: '% Desv', F: 'Desviación', G: '% Fact', H: 'Ppto',
  I: '% Fact', J: 'Real', L: 'Real', M: '% Fact', N: 'Ppto', O: '% Fact', P: 'Desviación', Q: '% Desv',
  R: 'Año\nAnterior', S: '% Fact', T: 'Desviación', U: '% Desv',
};

const Caption = styled.span`
  white-space: pre-line;
`;

const TableRow = styled.tr<{ $h: number }>`
  height: ${p => p.$h}px;
`;

function DataRow({ n }: { n: number }) {
  const values = (cellText[n] ?? '').split('|');
  return (
    <TableRow $h={17}>
      <OutlineCell $kind={outline[n] ?? ''}>
        {outline[n] === 'end' && <FoldButton aria-label={`Contraer grupo ${n}`} />}
      </OutlineCell>
      <RowHead scope="row">{n}</RowHead>
      {columns.map(([name], i) => {
        if (i > 20) return <Cell key={name} />;
        let text = values[i] ?? '';
        const bold = text.startsWith('*');
        const face = text.startsWith('~');
        if (bold || face) text = text.slice(1);
        const err = text === '#';
        const big = wide.has(name) || name === 'K';
        const right = wide.has(name) || (rightSmall.has(name) && !err);
        return (
          <Cell
            key={name}
            $right={rightBorder[name]}
            $bottom={ruled.has(n) ? 1 : 0}
            $fill={fills[n]}
            $align={name === 'K' ? 'left' : right ? 'right' : 'center'}
            $size={face ? 13 : big ? 12 : bold ? 10 : 9}
            $pad={name === 'K' ? 2 : right ? (wide.has(name) && !rightBorder[name] ? 6 : 4) : 0}
            $bold={bold}
            $red={text.startsWith('-')}
            $err={err}
            $calibri={face}
          >
            {err ? '#¡REF!' : text}
          </Cell>
        );
      })}
    </TableRow>
  );
}

function Grid() {
  return (
    <Sheet>
      <colgroup>
        <col style={{ width: 37 }} />
        <col style={{ width: 26 }} />
        {columns.map(([name, w]) => (
          <col key={name} style={{ width: w }} />
        ))}
      </colgroup>
      <thead>
        <TableRow $h={17}>
          <LevelCell>
            <LevelButton>1</LevelButton>
            <LevelButton>2</LevelButton>
          </LevelCell>
          <Corner />
          {columns.map(([name]) => (
            <ColHead key={name} scope="col" $sel={name === 'K'}>{name}</ColHead>
          ))}
        </TableRow>
      </thead>
      <tbody>
        <TableRow $h={23}>
          <OutlineCell $kind="" />
          <RowHead scope="row" $middle>1</RowHead>
          <Cell colSpan={6} $right={1} $bold $calibri $middle $size={16} $pad={3}>
            CUENTA DE RESULTADOS ANALITICA CONSOLIDADA
          </Cell>
          {['AÑO', '2021', 'MES', 'MAYO'].map(t => (
            <Cell key={t} $right={1} $bottom={1} $fill={lime} $calibri $middle $size={15} $pad={2} $align={t === 'MAYO' ? 'left' : 'right'}>
              {t}
            </Cell>
          ))}
          <Cell colSpan={13} />
        </TableRow>
        <TableRow $h={18}>
          <OutlineCell $kind="" />
          <RowHead scope="row" $sel>2</RowHead>
          <Cell colSpan={10} $bottom={2} />
          <ActiveCell><Selection /></ActiveCell>
          <Cell colSpan={10} $bottom={2} />
          <Cell colSpan={2} />
        </TableRow>
        <TableRow $h={18}>
          <OutlineCell $kind="" />
          <RowHead scope="row">3</RowHead>
          <Cell colSpan={10} $right={2} $bottom={2} $fill={lime} $bold $calibri $align="center">MENSUAL</Cell>
          <Cell $right={2} />
          <Cell colSpan={10} $right={2} $bottom={2} $fill={lime} $bold $calibri $align="center">ACUMALDO</Cell>
          <Cell colSpan={2} />
        </TableRow>
        <TableRow $h={32}>
          <OutlineCell $kind="" />
          <RowHead scope="row">4</RowHead>
          {columns.map(([name], i) => {
            const real = name === 'J' || name === 'L';
            return (
              <Cell
                key={name}
                $right={i > 20 ? 0 : rightBorder[name]}
                $bottom={i > 20 ? 0 : 1}
                $fill={real ? lime : undefined}
                $bold={real}
                $align="center"
                $size={wide.has(name) ? 12 : 9}
              >
                <Caption>{captions[name]}</Caption>
              </Cell>
            );
          })}
        </TableRow>
        {bodyRows.map(n => (
          <DataRow key={n} n={n} />
        ))}
      </tbody>
    </Sheet>
  );
}

/* ---------- ribbon groups ---------- */

function Group({ w, name, top = 10, left = 10, launcher, children }: {
  w: number; name: string; top?: number; left?: number; launcher?: boolean; children: React.ReactNode;
}) {
  return (
    <GroupBox $w={w}>
      <GroupBody $top={top} $left={left}>{children}</GroupBody>
      <GroupFoot>
        <GroupName>{name}</GroupName>
        {launcher && <Launcher aria-label={`Más de ${name}`}><LaunchIcon /></Launcher>}
      </GroupFoot>
    </GroupBox>
  );
}

function Drop({ w = 12, label }: { w?: number; label: string }) {
  return <Tool $w={w} aria-label={label}><Chev /></Tool>;
}

function Big({ w, icon, lines, drop, off }: {
  w: number; icon: React.ReactNode; lines: [string, string?]; drop?: boolean; off?: boolean;
}) {
  return (
    <BigButton $w={w} $off={off}>
      <BigIcon>{icon}</BigIcon>
      <BigLine>{lines[0]}</BigLine>
      <BigLine>{lines[1]}{drop && <Chev />}</BigLine>
    </BigButton>
  );
}

const Underlined = styled.u`
  text-underline-offset: 3px;
`;

const Glyph = styled.span<{ $size: number; $dim?: boolean }>`
  font-size: ${p => p.$size}px;
  color: ${p => (p.$dim ? '#8a8886' : 'inherit')};
`;

const CellsTool = styled(TextTool)<{ $gap: number }>`
  height: 22px;
  & > svg:last-child { margin-left: ${p => p.$gap}px; }
`;

const SmallTool = styled.button`
  display: flex;
  align-items: center;
  justify-content: space-between;
  width: 34px;
  height: 22px;
`;

function RibbonGroups() {
  return (
    <Ribbon>
      <Group w={120} name="Portapapeles" top={2} left={8} launcher>
        <Big w={56} icon={<PasteIcon />} lines={['Pegar']} drop />
        <Stack $gap={0} $w={50}>
          <Row $h={26}><Tool $w={24} aria-label="Cortar"><CutIcon /></Tool></Row>
          <Row $h={32}><Tool $w={24} aria-label="Copiar"><CopyIcon /></Tool><Drop w={18} label="Opciones de copia" /></Row>
          <Row $h={28}><Tool $w={24} aria-label="Copiar formato"><BrushIcon /></Tool></Row>
        </Stack>
      </Group>
      <Group w={288} name="Fuente" launcher>
        <Stack>
          <Row>
            <Picker $w={144}><Select aria-label="Fuente"><option>Calibri</option></Select><Chev /></Picker>
            <Picker $w={62}><Select aria-label="Tamaño de fuente"><option>11</option></Select><Chev /></Picker>
            <Tool $w={30} aria-label="Aumentar tamaño"><GrowIcon /></Tool>
            <Tool $w={32} aria-label="Disminuir tamaño"><GrowIcon small /></Tool>
          </Row>
          <Row>
            <Tool $w={28} $on><b>N</b></Tool>
            <Tool $w={30}><i>K</i></Tool>
            <Tool $w={32}><Underlined>S</Underlined></Tool>
            <Drop label="Tipo de subrayado" />
            <Divider $w={18} />
            <Tool $w={18} aria-label="Bordes"><BordersIcon /></Tool>
            <Drop w={28} label="Más bordes" />
            <Divider $w={4} />
            <Tool $w={32} aria-label="Color de relleno"><BucketIcon /></Tool>
            <Drop label="Más colores de relleno" />
            <Tool $w={40} aria-label="Color de fuente"><FontColorIcon /></Tool>
            <Drop w={8} label="Más colores de fuente" />
          </Row>
        </Stack>
      </Group>
      <Group w={369} name="Alineación" left={8} launcher>
        <Stack $w={162}>
          <Row>
            <Tool $w={32} aria-label="Alinear arriba"><Lines rows={[[0, 18, 1], [3, 15, 6], [0, 18, 11]]} /></Tool>
            <Tool $w={30} aria-label="Alinear en el medio"><Lines rows={[[0, 18, 4], [3, 15, 9], [0, 18, 14]]} /></Tool>
            <Tool $w={28} $on aria-label="Alinear abajo"><Lines rows={[[0, 18, 18], [3, 15, 13], [0, 18, 8]]} /></Tool>
            <Divider $w={8} />
            <Tool $w={30} aria-label="Orientación"><OrientIcon /></Tool>
            <Drop w={10} label="Más orientaciones" />
          </Row>
          <Row>
            <Tool $w={32} aria-label="Alinear a la izquierda"><Lines rows={[[0, 18, 1], [0, 12, 6], [0, 18, 11], [0, 12, 16]]} /></Tool>
            <Tool $w={30} aria-label="Centrar"><Lines rows={[[0, 18, 1], [3, 15, 6], [0, 18, 11], [3, 15, 16]]} /></Tool>
            <Tool $w={28} aria-label="Alinear a la derecha"><Lines rows={[[0, 18, 1], [6, 18, 6], [0, 18, 11], [6, 18, 16]]} /></Tool>
            <Divider $w={8} />
            <Tool $w={30} aria-label="Disminuir sangría"><IndentIcon /></Tool>
            <Tool $w={30} aria-label="Aumentar sangría"><IndentIcon inward /></Tool>
          </Row>
        </Stack>
        <TallDivider />
        <Stack>
          <TextTool><WrapIcon />Ajustar texto</TextTool>
          <Row><TextTool><MergeIcon />Combinar y centrar</TextTool><Drop w={32} label="Más opciones de combinar" /></Row>
        </Stack>
      </Group>
      <Group w={194} name="Número" launcher>
        <Stack>
          <Row><Picker $w={174}><Select aria-label="Formato de número"><option>General</option></Select><Chev /></Picker></Row>
          <Row>
            <Tool $w={28} aria-label="Formato de contabilidad"><CurrencyIcon /></Tool>
            <Drop w={18} label="Más monedas" />
            <Tool $w={34}><Glyph $size={22}>%</Glyph></Tool>
            <Tool $w={26}><Glyph $size={12} $dim>000</Glyph></Tool>
            <Divider $w={10} />
            <Tool $w={28} aria-label="Aumentar decimales"><DecimalIcon /></Tool>
            <Tool $w={31} aria-label="Disminuir decimales"><DecimalIcon less /></Tool>
          </Row>
        </Stack>
      </Group>
      <Group w={279} name="Estilos" top={2}>
        <Big w={96} icon={<CondIcon />} lines={['Formato', 'condicional']} drop />
        <Big w={94} icon={<TableIcon />} lines={['Dar formato', 'como tabla']} drop />
        <Big w={70} icon={<StyleIcon />} lines={['Estilos de', 'celda']} drop />
      </Group>
      <Group w={131} name="Celdas" top={1} left={14}>
        <Stack $gap={7}>
          <CellsTool $gap={8}><CellsIcon kind="in" />Insertar<Chev /></CellsTool>
          <CellsTool $gap={10}><CellsIcon kind="out" />Eliminar<Chev /></CellsTool>
          <CellsTool $gap={0}><CellsIcon kind="fmt" />Formato<Chev /></CellsTool>
        </Stack>
      </Group>
      <Group w={231} name="Edición" top={2} left={14}>
        <Stack $gap={7} $w={41}>
          <SmallTool aria-label="Autosuma"><SumIcon /><Chev /></SmallTool>
          <SmallTool aria-label="Rellenar"><FillIcon /><Chev /></SmallTool>
          <SmallTool aria-label="Borrar"><EraserIcon /><Chev /></SmallTool>
        </Stack>
        <Big w={76} icon={<SortIcon />} lines={['Ordenar y', 'filtrar']} drop />
        <Big w={86} icon={<FindIcon />} lines={['Buscar y', 'seleccionar']} drop />
      </Group>
      <Group w={79} name="Análisis" top={2} left={0}>
        <Big w={78} icon={<AnalyzeIcon />} lines={['Analizar', 'datos']} />
      </Group>
      <Group w={138} name="Confidencialidad" top={2} left={0}>
        <Big w={137} icon={<SensIcon />} lines={['Confidencialidad']} drop off />
      </Group>
      <Collapse aria-label="Contraer la cinta"><svg width="13" height="8" viewBox="0 0 13 8" fill="none" stroke="#444" strokeWidth="1.400"><path d="M1 7l5.500-5.500L12 7" /></svg></Collapse>
    </Ribbon>
  );
}

/* ---------- taskbar icons ---------- */

const ExplorerIcon = () => (
  <svg width="28" height="24" viewBox="0 0 28 24">
    <path d="M0 2q0-2 2-2h9l3 4H0z" fill="#dd9b00" />
    <path d="M0 4h13l2-2h11q2 0 2 2v16q0 2-2 2H2q-2 0-2-2z" fill="#ffd666" />
    <path d="M5 23v-8q0-3 3-3h12q3 0 3 3v8h-4v-6H9v6z" fill="#3a93dc" />
  </svg>
);
const EdgeIcon = () => (
  <svg width="30" height="30" viewBox="0 0 30 30">
    <circle cx="15" cy="15" r="15" fill="#1173c7" />
    <path d="M1 12C3 4 9 0 16 0c8 0 14 6 14 12 0 5-4 7-8 7-3 0-4-1-4-2s1-1 1-4c0-3-4-5-8-5-5 0-9 3-10 4z" fill="#42b8d0" />
    <path d="M20 1c6 2 10 7 10 11 0 5-4 7-8 7-3 0-4-1-4-2 6-1 8-8 2-16z" fill="#62d87a" />
    <path d="M12 12c-3 7 2 15 11 14 2 0 3-1 5-2-3 4-7 6-12 6C9 30 6 23 7 18c0-4 3-6 5-6z" fill="#0c4a94" />
    <path d="M18 17c0 3 5 4 11 1l1 2c-6 4-14 3-15-2-1-3 1-5 4-6 0 2-1 4-1 5z" fill="#44302a" />
  </svg>
);
const ChromeIcon = () => (
  <svg width="28" height="28" viewBox="0 0 28 28">
    <circle cx="14" cy="14" r="14" fill="#fbc940" />
    <path d="M1.900 7A14 14 0 0 1 26.100 7H14a7 7 0 0 0-6 10.500z" fill="#dd5144" />
    <path d="M1.900 7L8 17.500A7 7 0 0 0 16 20.700L14 28A14 14 0 0 1 1.900 7z" fill="#1da260" />
    <circle cx="14" cy="14" r="6.800" fill="#fff" />
    <circle cx="14" cy="14" r="5.300" fill="#4285f4" />
  </svg>
);
const FirefoxIcon = () => (
  <svg width="28" height="30" viewBox="0 0 28 30">
    <path d="M2 8l2-4 3 3c2-2 4-2 6-1 1-3 3-5 5-6 0 3 2 4 4 6l2 1c3 4 4 7 4 10A13.500 13.500 0 0 1 1 17c0-4 0-6 1-9z" fill="#ff8a1c" />
    <path d="M18 0c0 3 2 4 4 6 3 4 5 7 5 11 0 3-2 7-4 9 1-6 0-10-3-12-4-3-6-9-2-14z" fill="#ffd43a" />
    <circle cx="14" cy="15" r="6" fill="#7b3fd6" />
    <path d="M3 9c4-2 7 0 10 2-3 1-5 2-5 5 0 4 5 6 9 4-3 5-10 4-12-1C4 16 2 13 3 9z" fill="#ff6a2e" />
    <path d="M1 17c1 8 8 13 15 12 4 0 8-3 10-6-6 5-21 3-25-6z" fill="#f0375a" />
  </svg>
);
const Letter = styled.text`
  font: 700 13px ${ui};
  fill: #fff;
`;
const ExcelIcon = () => (
  <svg width="30" height="28" viewBox="0 0 30 28">
    <path d="M7 0h11v14H7z" fill="#21a366" /><path d="M18 0h11v7H18z" fill="#33c481" /><path d="M18 7h11v7H18z" fill="#21a366" />
    <path d="M7 14h11v14H7z" fill="#185c37" /><path d="M18 14h11v7H18z" fill="#107c41" /><path d="M18 21h11v7H18z" fill="#185c37" />
    <rect y="6" width="15" height="16" rx="1" fill="#107c41" /><Letter x="3" y="19">X</Letter>
  </svg>
);
const PowerPointIcon = () => (
  <svg width="30" height="28" viewBox="0 0 30 28">
    <circle cx="16" cy="14" r="14" fill="#d35230" /><path d="M16 0a14 14 0 0 1 14 14H16z" fill="#ff8f6b" /><path d="M16 14V0A14 14 0 0 0 2 14z" fill="#ed6c47" />
    <rect y="6" width="15" height="16" rx="1" fill="#c43e1c" /><Letter x="3" y="19">P</Letter>
  </svg>
);
const PowerBiIcon = () => (
  <svg width="22" height="30" viewBox="0 0 22 30">
    <rect x="12" width="10" height="30" rx="1" fill="#dd9a0c" /><rect x="6" y="7" width="10" height="23" rx="1" fill="#efc030" /><rect y="15" width="10" height="15" rx="1" fill="#fae06a" />
  </svg>
);
const CamtasiaIcon = () => (
  <svg width="30" height="30" viewBox="0 0 30 30" fill="none">
    <rect width="30" height="30" rx="2" fill="#58ac08" />
    <path d="M24 10V6H11L7 10v10l4 4h13v-4" stroke="#fff" strokeWidth="4" />
  </svg>
);
const WordIcon = () => (
  <svg width="30" height="28" viewBox="0 0 30 28">
    <path d="M7 0h22v7H7z" fill="#41a5ee" /><path d="M7 7h22v7H7z" fill="#2b7cd3" /><path d="M7 14h22v7H7z" fill="#185abd" /><path d="M7 21h22v7H7z" fill="#103f91" />
    <rect y="6" width="15" height="16" rx="1" fill="#185abd" /><Letter x="1" y="19">W</Letter>
  </svg>
);
const StudioIcon = ({ code }: { code?: boolean }) => (
  <svg width="30" height="30" viewBox="0 0 30 30" fill="none">
    {!code && <path d="M1.500 9v12" stroke="#6a2fb3" strokeWidth="3" />}
    <path d="M2 10l21 15.500" stroke={code ? '#1f8fdc' : '#7a3fc0'} strokeWidth="5" />
    <path d="M2 20L23 4.500" stroke={code ? '#0f77c2' : '#9460d4'} strokeWidth="5" />
    <path d="M22 0l8 3v24l-8 3z" fill={code ? '#2aa7f5' : '#b98af0'} />
  </svg>
);
const MovieIcon = () => (
  <svg width="30" height="30" viewBox="0 0 30 30">
    <path d="M0 13V7q0-2 2-3L27 1q3 0 3 3l-1 3L6 9z" fill="#35a9ea" />
    <path d="M7 9l4-6M15 8l4-6M23 7l4-6" stroke="#1470c8" strokeWidth="2" />
    <path d="M0 10h30v18q0 2-2 2H2q-2 0-2-2z" fill="#1268bd" />
    <path d="M11 13v13l10-6.500z" fill="#fff" />
  </svg>
);
const HelpIcon = () => (
  <svg width="30" height="28" viewBox="0 0 30 28">
    <circle cx="13" cy="14" r="13" fill="#fff" /><circle cx="13" cy="14" r="11" fill="#128bcb" />
    <path d="M9 11c0-6 9-6 9-1 0 4-5 3-5 7M13 19.500v3" fill="none" stroke="#fff" strokeWidth="2.600" />
    <circle cx="23" cy="20" r="6" fill="#128bcb" /><path d="M23 19v5M23 16v1.500" stroke="#fff" strokeWidth="1.800" />
  </svg>
);

export default function App() {
  return (
    <Window>
      <GlobalStyle />
      <TitleBar>
        <Circuit width="640" height="43" viewBox="1280 0 640 43" fill="none" stroke="#1f6440" strokeWidth="6">
          <circle cx="1306" cy="18" r="4.500" strokeWidth="3" />
          <path d="M1311 18h212" />
          <circle cx="1528" cy="18" r="4.500" strokeWidth="3" />
          <path d="M1533 18h24" />
          <circle cx="1331" cy="46" r="18" strokeWidth="7" />
          <path d="M1318 41h22" />
          <circle cx="1388" cy="40" r="4.500" strokeWidth="3" />
          <path d="M1394 42h124M1570 27l22 18" />
          <circle cx="1642" cy="17" r="30" strokeWidth="8" />
          <path d="M1634 36l18-24M1634 8h22v18" strokeWidth="8" />
          <path d="M1774 45l16-14h130M1853 45l38-50M1876 45l34-50" />
        </Circuit>
        <TitleLeft>
          <SwitchLabel>Autoguardado<Switch type="checkbox" role="switch" /></SwitchLabel>
          <QuickButton $w={50} aria-label="Guardar"><SaveIcon /></QuickButton>
          <QuickButton $w={22} aria-label="Deshacer"><UndoIcon /></QuickButton>
          <QuickButton $w={20} aria-label="Historial de deshacer"><Chev /></QuickButton>
          <QuickButton $w={34} $dim aria-label="Rehacer"><UndoIcon flip /></QuickButton>
          <QuickButton $w={8} $dim aria-label="Historial de rehacer"><Chev /></QuickButton>
          <QuickButton $w={40} aria-label="Editar documento"><DocPenIcon /></QuickButton>
          <QuickButton $w={6} aria-label="Más de editar documento"><Chev /></QuickButton>
          <QuickButton $w={48} aria-label="Personalizar barra">
            <svg width="9" height="9" viewBox="0 0 9 9" fill="none" stroke="#fff" strokeWidth="1.300"><path d="M0 1h9M1.500 4l3 3 3-3" /></svg>
          </QuickButton>
          <DocName>Modelo P&amp;L <svg width="8" height="5" viewBox="0 0 8 5"><path d="M0 0h8L4 4.500z" fill="#fff" /></svg></DocName>
        </TitleLeft>
        <SearchBox>
          <SearchIcon size={18} color="#0e5c2f" />
          <SearchInput aria-label="Buscar" placeholder="Buscar" />
        </SearchBox>
        <TitleRight>
          José Santos
          <Avatar>JS</Avatar>
          <WinButton aria-label="Opciones de cinta">
            <svg width="17" height="14" viewBox="0 0 17 14" fill="none" stroke="#fff" strokeWidth="1.200"><path d="M.6.6h15.800v12.800H.6zM.6 3.800h15.800M8.500 12V6M5.500 8.500l3-3 3 3" /></svg>
          </WinButton>
          <WinButton aria-label="Minimizar"><svg width="13" height="2"><path d="M0 0h13v2H0z" fill="#fff" /></svg></WinButton>
          <WinButton aria-label="Restaurar">
            <svg width="13" height="13" viewBox="0 0 13 13" fill="none" stroke="#fff" strokeWidth="1.300"><path d="M.7 3.500h9v9h-9zM3.500 3.500V.7h9v9H9.700" /></svg>
          </WinButton>
          <WinButton aria-label="Cerrar"><svg width="13" height="13" viewBox="0 0 13 13" stroke="#fff" strokeWidth="1.400"><path d="M.5.5l12 12M12.500.5l-12 12" /></svg></WinButton>
        </TitleRight>
      </TitleBar>

      <TabRow>
        {['Archivo', 'Inicio', 'Insertar', 'Disposición de página', 'Fórmulas', 'Datos', 'Revisar', 'Vista', 'Programador', 'Ayuda', 'Power Pivot', 'Script Lab'].map(t => (
          <Tab key={t} $active={t === 'Inicio'}>{t}</Tab>
        ))}
        <TabActions>
          <ActionButton>
            <svg width="15" height="15" viewBox="0 0 15 15" fill="none" stroke={green} strokeWidth="1.200"><path d="M4 5H1v9h11v-4M4 10c0-4 2-5.500 5-5.500V1.500L14 6 9 10V7.500C7 7.500 5 8 4 10z" /></svg>
            Compartir
          </ActionButton>
          <ActionButton>
            <svg width="14" height="14" viewBox="0 0 14 14" fill="none" stroke={green} strokeWidth="1.200"><path d="M1 1h12v8.500H6L3.500 12.500v-3H1z" /></svg>
            Comentarios
          </ActionButton>
        </TabActions>
      </TabRow>
      <RibbonGroups />
      <RibbonShadow />

      <FormulaBar>
        <NameBox>
          <NameInput aria-label="Cuadro de nombres" defaultValue="K2" />
          <button aria-label="Lista de nombres"><svg width="8" height="5" viewBox="0 0 8 5"><path d="M0 0h8L4 4.500z" fill="#666" /></svg></button>
        </NameBox>
        <Grip />
        <FxBox>
          <button aria-label="Cancelar"><svg width="15" height="14" viewBox="0 0 15 14" stroke="#bcbcbc" strokeWidth="2"><path d="M1 1l13 12M14 1L1 13" /></svg></button>
          <button aria-label="Introducir"><svg width="17" height="14" viewBox="0 0 17 14" fill="none" stroke="#bcbcbc" strokeWidth="3"><path d="M1 7.500l5 5L16 1" /></svg></button>
          <FxButton>fx</FxButton>
        </FxBox>
        <FormulaField>
          <FormulaInput aria-label="Barra de fórmulas" />
          <button aria-label="Expandir"><svg width="10" height="8" viewBox="0 0 10 8" fill="none" stroke="#666" strokeWidth="2.200"><path d="M1 1.500l4 4 4-4" /></svg></button>
        </FormulaField>
      </FormulaBar>

      <SheetArea>
        <SheetClip><Grid /></SheetClip>
        <VScroll>
          <ScrollButton aria-label="Subir"><Tri dir="up" /></ScrollButton>
          <VThumb />
          <ScrollButton $end aria-label="Bajar"><Tri dir="down" /></ScrollButton>
        </VScroll>
      </SheetArea>

      <SheetTabs>
        <TabArrows>
          <svg width="6" height="9" viewBox="0 0 6 9"><path d="M5.500 0v9L0 4.500z" fill="#bdbdbd" /></svg>
          <svg width="6" height="9" viewBox="0 0 6 9"><path d="M.5 0v9L6 4.500z" fill="#bdbdbd" /></svg>
        </TabArrows>
        <SheetTab>Hoja1</SheetTab>
        <AddSheet aria-label="Hoja nueva">
          <svg width="21" height="21" viewBox="0 0 21 21" fill="none" stroke="#7a7a7a" strokeWidth="1.300"><circle cx="10.500" cy="10.500" r="9.500" /><path d="M10.500 5v11M5 10.500h11" /></svg>
        </AddSheet>
        <HScroll>
          <HGrip />
          <ScrollButton aria-label="Izquierda"><Tri dir="left" /></ScrollButton>
          <HTrack><HThumb /></HTrack>
          <ScrollButton aria-label="Derecha"><Tri dir="right" /></ScrollButton>
        </HScroll>
      </SheetTabs>

      <StatusBar>
        Listo
        <StatusIcon aria-label="Grabar macro">
          <svg width="19" height="17" viewBox="0 0 19 17" fill="none" stroke="#555" strokeWidth="1.200">
            <path d="M1 1h16v3H1zM1 4v11h6M17 4v2M3 7h3M3 10h3M3 13h3" /><circle cx="13" cy="11" r="4.800" fill="#fff" /><circle cx="13" cy="11" r="2.200" fill="#444" />
          </svg>
        </StatusIcon>
        <Views>
          <ViewButton $on aria-label="Normal"><svg width="17" height="16" viewBox="0 0 17 16" fill="#fff" stroke="#555" strokeWidth="1.300"><path d="M1 1h15v14H1zM6 1v14M11 1v14M1 5.700h15M1 10.300h15" /></svg></ViewButton>
          <ViewButton aria-label="Diseño de página"><svg width="17" height="16" viewBox="0 0 17 16" fill="none" stroke="#555" strokeWidth="1.300"><path d="M1 1h15v14H1zM4 3.500h9v9H4zM6 6h5M6 8h5M6 10h5" /></svg></ViewButton>
          <ViewButton aria-label="Salto de página"><svg width="17" height="16" viewBox="0 0 17 16" fill="none" stroke="#555" strokeWidth="1.300"><path d="M1 1h15v14H1zM1 10h10V1M6 1v6" /></svg></ViewButton>
        </Views>
        <ZoomBox>
          <ZoomStep>−</ZoomStep>
          <ZoomSlider type="range" aria-label="Zoom" min={0} max={100} defaultValue={34} />
          <ZoomStep>+</ZoomStep>
          <ZoomValue>70 %</ZoomValue>
        </ZoomBox>
      </StatusBar>

      <Taskbar>
        <StartButton aria-label="Inicio">
          <svg width="20" height="20" viewBox="0 0 20 20" fill="#fff"><path d="M0 3l9-1.300v7.800H0zM10 1.500L20 0v9.500H10zM0 10.500h9v7.800L0 17zM10 10.500h10V20l-10-1.500z" /></svg>
        </StartButton>
        <TaskSearch>
          <SearchIcon size={21} color="#222" w={1.4} />
          <TaskInput aria-label="Buscar en Windows" placeholder="Escribe aquí para buscar" />
        </TaskSearch>
        <TaskApps>
          <AppButton $open aria-label="Explorador"><ExplorerIcon /></AppButton>
          <AppButton $open aria-label="Edge"><EdgeIcon /></AppButton>
          <AppButton $open aria-label="Chrome"><ChromeIcon /></AppButton>
          <AppButton aria-label="Firefox"><FirefoxIcon /></AppButton>
          <AppButton $open $on aria-label="Excel"><ExcelIcon /></AppButton>
          <AppButton aria-label="PowerPoint"><PowerPointIcon /></AppButton>
          <AppButton aria-label="Power BI"><PowerBiIcon /></AppButton>
          <AppButton aria-label="Camtasia"><CamtasiaIcon /></AppButton>
          <AppButton aria-label="Word"><WordIcon /></AppButton>
          <AppButton aria-label="Visual Studio"><StudioIcon /></AppButton>
          <AppButton aria-label="Visual Studio Code"><StudioIcon code /></AppButton>
          <AppButton $open aria-label="Películas"><MovieIcon /></AppButton>
        </TaskApps>
        <Tray>
          <TrayButton $w={30} aria-label="Ayuda"><HelpIcon /></TrayButton>
          <Weather>
            <svg width="24" height="24" viewBox="0 0 24 24"><defs><linearGradient id="sun" x1="0" y1="0" x2="1" y2="1"><stop offset="0" stopColor="#ffe16a" /><stop offset="1" stopColor="#f98a0c" /></linearGradient></defs><circle cx="12" cy="12" r="12" fill="url(#sun)" /></svg>
            {'23°C  Soleado'}
          </Weather>
          <TrayButton $w={30} aria-label="Iconos ocultos"><svg width="16" height="9" viewBox="0 0 16 9" fill="none" stroke="#fff" strokeWidth="1.500"><path d="M1 8l7-6.500L15 8" /></svg></TrayButton>
          <TrayButton $w={30} aria-label="Actualización">
            <svg width="22" height="20" viewBox="0 0 22 20" fill="none" stroke="#fff" strokeWidth="1.400"><path d="M2 3h8l9-2v13M2 3v14h8M7 8c2-3 7-3 8 0M15 5v3h-3M7 13v-3h3" /><circle cx="16" cy="15" r="5" fill="#ff9a1a" stroke="none" /></svg>
          </TrayButton>
          <TrayButton $w={30} aria-label="Batería">
            <svg width="21" height="14" viewBox="0 0 21 14" fill="none" stroke="#fff" strokeWidth="1.400"><path d="M6 3h13v10H4V9M19 6h1.500v4H19M1 3h5v3q0 2-2.500 2T1 6zM2.200 3V0M4.800 3V0" /><path d="M7 5h10v6H7z" fill="#fff" /></svg>
          </TrayButton>
          <TrayButton $w={30} aria-label="Red">
            <svg width="17" height="17" viewBox="0 0 17 17" fill="none" stroke="#fff" strokeWidth="1.300"><path d="M1 14C1 7 7 1 15 1M5 15c0-6 4-10 10-10M9 16c0-4 2-7 6-7" /><circle cx="14" cy="14.500" r="1.500" fill="#fff" /></svg>
          </TrayButton>
          <TrayButton $w={30} aria-label="Volumen">
            <svg width="19" height="16" viewBox="0 0 19 16" fill="none" stroke="#fff" strokeWidth="1.300"><path d="M1 5h3l4-4v14l-4-4H1zM11 5q2 3 0 6M13.500 3q3.500 5 0 10" /><path d="M16 1q4 7 0 14" opacity=".5" /></svg>
          </TrayButton>
          <Clock>21:48<br />07/07/2021</Clock>
          <TrayButton $w={62} aria-label="Notificaciones">
            <svg width="30" height="32" viewBox="0 0 30 32"><path d="M0 2h20v16h-5l-4 4v-4H0z" fill="#fff" /><path d="M4 6h12M4 10h12M4 14h8" stroke="#223a42" strokeWidth="1.500" /><circle cx="20" cy="22" r="9.500" fill="#333" stroke="#888" /><text x="16" y="27" fontFamily={ui} fontSize="14" fill="#fff">1</text></svg>
          </TrayButton>
          <Edge />
        </Tray>
      </Taskbar>
    </Window>
  );
}
